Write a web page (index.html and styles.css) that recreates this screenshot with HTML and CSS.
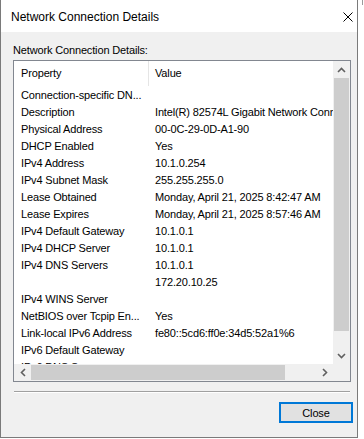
FILE: index.html
```html
<!DOCTYPE html>
<html>
<head>
<meta charset="utf-8">
<link rel="stylesheet" href="styles.css">
</head>
<body>
<div class="behind"></div>
<div class="window">
  <div class="titlebar">
    <span class="title">Network Connection Details</span>
    <svg class="close" width="10" height="10" viewBox="0 0 10 10"><path d="M0.5 0.5 L9.5 9.5 M9.5 0.5 L0.5 9.5" stroke="#000" stroke-width="1" fill="none"/></svg>
  </div>
  <div class="body">
    <div class="label">Network Connection Details:</div>
    <div class="listbox">
      <div class="view">
        <div class="header">
          <div class="hcell c1">Property</div>
          <div class="hcell c2">Value</div>
        </div>
        <div class="row"><div class="c1">Connection-specific DN...</div><div class="c2"></div></div>
        <div class="row"><div class="c1">Description</div><div class="c2">Intel(R) 82574L Gigabit Network Connection</div></div>
        <div class="row"><div class="c1">Physical Address</div><div class="c2">00-0C-29-0D-A1-90</div></div>
        <div class="row"><div class="c1">DHCP Enabled</div><div class="c2">Yes</div></div>
        <div class="row"><div class="c1">IPv4 Address</div><div class="c2">10.1.0.254</div></div>
        <div class="row"><div class="c1">IPv4 Subnet Mask</div><div class="c2">255.255.255.0</div></div>
        <div class="row"><div class="c1">Lease Obtained</div><div class="c2">Monday, April 21, 2025 8:42:47 AM</div></div>
        <div class="row"><div class="c1">Lease Expires</div><div class="c2">Monday, April 21, 2025 8:57:46 AM</div></div>
        <div class="row"><div class="c1">IPv4 Default Gateway</div><div class="c2">10.1.0.1</div></div>
        <div class="row"><div class="c1">IPv4 DHCP Server</div><div class="c2">10.1.0.1</div></div>
        <div class="row"><div class="c1">IPv4 DNS Servers</div><div class="c2">10.1.0.1</div></div>
        <div class="row"><div class="c1"></div><div class="c2">172.20.10.25</div></div>
        <div class="row"><div class="c1">IPv4 WINS Server</div><div class="c2"></div></div>
        <div class="row"><div class="c1">NetBIOS over Tcpip En...</div><div class="c2">Yes</div></div>
        <div class="row"><div class="c1">Link-local IPv6 Address</div><div class="c2">fe80::5cd6:ff0e:34d5:52a1%6</div></div>
        <div class="row"><div class="c1">IPv6 Default Gateway</div><div class="c2"></div></div>
        <div class="row"><div class="c1">IPv6 DNS Servers</div><div class="c2"></div></div>
      </div>
      <div class="vscroll">
        <div class="sbtn"><svg width="9" height="6" viewBox="0 0 9 6"><path d="M1 5 L4.5 1.5 L8 5" stroke="#606060" stroke-width="1.6" fill="none"/></svg></div>
        <div class="vtrack"><div class="vthumb"></div></div>
        <div class="sbtn"><svg width="9" height="6" viewBox="0 0 9 6"><path d="M1 1 L4.5 4.5 L8 1" stroke="#606060" stroke-width="1.6" fill="none"/></svg></div>
      </div>
      <div class="hscroll">
        <div class="sbtn"><svg width="6" height="9" viewBox="0 0 6 9"><path d="M5 1 L1.5 4.5 L5 8" stroke="#606060" stroke-width="1.6" fill="none"/></svg></div>
        <div class="htrack"><div class="hthumb"></div></div>
        <div class="sbtn"><svg width="6" height="9" viewBox="0 0 6 9"><path d="M1 1 L4.5 4.5 L1 8" stroke="#606060" stroke-width="1.6" fill="none"/></svg></div>
      </div>
      <div class="corner"></div>
    </div>
    <div class="sep"></div>
    <div class="buttons"><button class="btn">Close</button></div>
  </div>
</div>
</body>
</html>
```
FILE: styles.css
```css
html, body {
  margin: 0;
  padding: 0;
  background: #ffffff;
}
body {
  position: relative;
}
.behind {
  position: absolute;
  left: 362px;
  top: 0;
  width: 1px;
  height: 5px;
  background: #9a9a9a;
}
.window {
  box-sizing: border-box;
  width: 358px;
  height: 438px;
  border-left: 1px solid #7a7a7a;
  border-right: 1px solid #7a7a7a;
  border-bottom: 1px solid #7a7a7a;
  display: flex;
  flex-direction: column;
  font-family: "Liberation Sans", Arial, sans-serif;
  font-size: 11px;
  letter-spacing: -0.15px;
  color: #000;
}
.titlebar {
  height: 32px;
  flex: 0 0 32px;
  background: #ffffff;
  display: flex;
  align-items: center;
  padding: 0 0 0 10px;
  letter-spacing: 0;
}
.title {
  font-size: 12px;
  flex: 1;
  padding-top: 1px;
}
.close {
  margin-right: 4px;
  margin-top: 1px;
}
.body {
  flex: 1;
  background: #f0f0f0;
  padding: 12px 4px 0 12px;
  display: flex;
  flex-direction: column;
}
.label {
  line-height: 13px;
  height: 13px;
  margin-bottom: 3px;
}
.listbox {
  box-sizing: border-box;
  width: 338px;
  height: 322px;
  border: 1px solid #828790;
  background: #ffffff;
  display: grid;
  grid-template-columns: 319px 17px;
  grid-template-rows: 303px 17px;
}
.view {
  overflow: hidden;
  background: #fff;
}
.header {
  display: flex;
  height: 26px;
}
.hcell {
  line-height: 25px;
}
.header .c1 {
  border-right: 1px solid #e5e5e5;
  height: 25px;
}
.row {
  display: flex;
  height: 17px;
  line-height: 17px;
}
.c1 {
  box-sizing: border-box;
  width: 135px;
  flex: 0 0 135px;
  padding-left: 7px;
  white-space: nowrap;
  overflow: hidden;
}
.c2 {
  padding-left: 6px;
  white-space: nowrap;
}
.vscroll {
  background: #f0f0f0;
  display: flex;
  flex-direction: column;
}
.sbtn {
  width: 17px;
  height: 17px;
  flex: 0 0 17px;
  display: flex;
  align-items: center;
  justify-content: center;
}
.vtrack {
  flex: 1;
  padding: 0 1px;
}
.vthumb {
  height: 253px;
  background: #cdcdcd;
}
.hscroll {
  background: #f0f0f0;
  display: flex;
}
.htrack {
  flex: 1;
  padding: 1px 0;
}
.hthumb {
  width: 254px;
  height: 100%;
  background: #cdcdcd;
}
.corner {
  background: #f0f0f0;
}
.sep {
  width: 336px;
  height: 1px;
  border-bottom: 1px solid #ffffff;
  background: #a0a0a0;
  margin-top: 9px;
  margin-left: 1px;
}
.buttons {
  display: flex;
  justify-content: flex-end;
  margin-top: 9px;
}
.btn {
  box-sizing: border-box;
  width: 74px;
  height: 21px;
  border: 2px solid #0078d7;
  background: #e1e1e1;
  font-family: "Liberation Sans", Arial, sans-serif;
  font-size: 11px;
  letter-spacing: -0.15px;
  color: #000;
  padding: 0;
  margin: 0;
}
```
